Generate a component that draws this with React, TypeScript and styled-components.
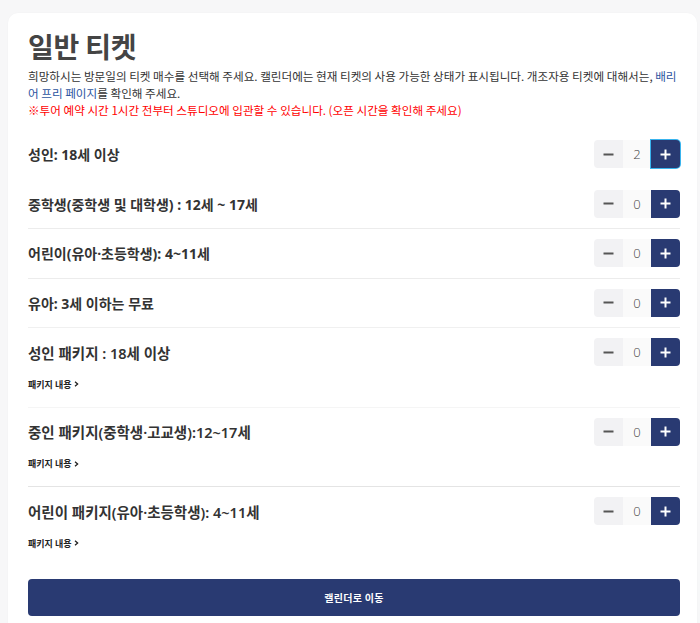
import React, { useState } from "react"
import styled, { createGlobalStyle } from "styled-components"

const GlobalStyle = createGlobalStyle`
    html, body {
        margin: 0;
        padding: 0;
        background: #f7f7f8;
        font-family: "Noto Sans CJK KR", "Noto Sans", sans-serif;
        color: #333;
    }
`

const Page = styled.div`
    padding: 13px 3px 0 8px;
`

const Card = styled.div`
    background: #fff;
    border-radius: 10px;
    padding: 15px 17px 20px 20px;
    box-shadow: 0 0 2px rgba(0, 0, 0, 0.03);
`

const Title = styled.h1`
    margin: 0;
    font-size: 28px;
    line-height: 36px;
    font-weight: 700;
    color: #444;
    letter-spacing: -0.2px;
`

const Desc = styled.p`
    margin: 4px 0 0;
    font-size: 11.6px;
    line-height: 17px;
    color: #333;
`

const Link = styled.span`
    color: #2c54a0;
`

const Notice = styled.span`
    color: #f00;
`

const List = styled.div`
    margin-top: 11px;
`

const Row = styled.div<{ $divider?: string }>`
    padding: 10px 0 10.5px;
    border-bottom: 1px solid ${(p) => p.$divider ?? "transparent"};
`

const RowTop = styled.div`
    display: flex;
    align-items: center;
    justify-content: space-between;
    height: 28px;
`

const Label = styled.span<{ $pkg?: boolean }>`
    font-family: "Noto Sans", "Noto Sans CJK KR", sans-serif;
    font-size: ${(p) => (p.$pkg ? "14.5px" : "14px")};
    font-weight: ${(p) => (p.$pkg ? 600 : 700)};
    color: #333;
`

const SubLink = styled.div`
    margin: 11.5px 0 5.5px;
    font-size: 9px;
    line-height: 13px;
    font-weight: 600;
    color: #222;
    display: flex;
    align-items: center;
    gap: 3px;
`

const Stepper = styled.div`
    display: flex;
    height: 28px;
    border-radius: 4px;
`

const StepButton = styled.button<{ $plus?: boolean; $focused?: boolean }>`
    width: 29px;
    height: 28px;
    border: none;
    padding: 0;
    display: flex;
    align-items: center;
    justify-content: center;
    cursor: pointer;
    background: ${(p) => (p.$plus ? "#293a72" : "#f2f2f4")};
    border-radius: ${(p) => (p.$plus ? "0 4px 4px 0" : "4px 0 0 4px")};
    box-shadow: ${(p) => (p.$focused ? "0 0 0 1px #39b4ee" : "none")};
`

const Value = styled.div`
    width: 28px;
    height: 28px;
    display: flex;
    align-items: center;
    justify-content: center;
    background: #fafafa;
    font-size: 13px;
    color: #444;
    font-family: "Open Sans", "Noto Sans", sans-serif;
    font-weight: 300;
`

const Submit = styled.button`
    margin-top: 12px;
    width: 100%;
    height: 37px;
    border: none;
    border-radius: 4px;
    background: #293a72;
    color: #fff;
    font-family: "Noto Sans CJK KR", sans-serif;
    font-size: 10px;
    font-weight: 700;
    letter-spacing: 0.3px;
    cursor: pointer;
`

const MinusIcon = () => (
    <svg width="11" height="11" viewBox="0 0 11 11">
        <line x1="0.5" y1="5.5" x2="10.5" y2="5.5" stroke="#555" strokeWidth="2" />
    </svg>
)

const PlusIcon = () => (
    <svg width="11" height="11" viewBox="0 0 11 11">
        <line x1="0.5" y1="5.5" x2="10.5" y2="5.5" stroke="#fff" strokeWidth="2" />
        <line x1="5.5" y1="0.5" x2="5.5" y2="10.5" stroke="#fff" strokeWidth="2" />
    </svg>
)

const Chevron = () => (
    <svg width="5" height="6" viewBox="0 0 5 6">
        <path d="M1 0.8 L3.6 3 L1 5.2" fill="none" stroke="#222" strokeWidth="1.3" />
    </svg>
)

const tickets = [
    { label: "성인: 18세 이상", count: 2, divider: "transparent", focused: true },
    { label: "중학생(중학생 및 대학생) : 12세 ~ 17세", count: 0, divider: "#ececec" },
    { label: "어린이(유아·초등학생): 4~11세", count: 0, divider: "#ececec" },
    { label: "유아: 3세 이하는 무료", count: 0, divider: "#f0f0f0" },
    { label: "성인 패키지 : 18세 이상", count: 0, pkg: true, divider: "#f5f5f5" },
    { label: "중인 패키지(중학생·고교생):12~17세", count: 0, pkg: true, divider: "#e4e4e4" },
    { label: "어린이 패키지(유아·초등학생): 4~11세", count: 0, pkg: true },
]

function App() {
    const [counts, setCounts] = useState(tickets.map((t) => t.count))

    const change = (index: number, diff: number) => {
        setCounts(counts.map((c, i) => (i === index ? Math.max(0, c + diff) : c)))
    }

    return (
        <Page>
            <GlobalStyle />
            <Card>
                <Title>일반 티켓</Title>
                <Desc>
                    희망하시는 방문일의 티켓 매수를 선택해 주세요. 캘린더에는 현재 티켓의 사용 가능한 상태가 표시됩니다. 개조자용 티켓에 대해서는, <Link>배리어 프리 페이지</Link>를 확인해 주세요.
                    <br />
                    <Notice>※투어 예약 시간 1시간 전부터 스튜디오에 입관할 수 있습니다. (오픈 시간을 확인해 주세요)</Notice>
                </Desc>
                <List>
                    {tickets.map((t, i) => (
                        <Row key={t.label} $divider={t.divider}>
                            <RowTop>
                                <Label $pkg={t.pkg}>{t.label}</Label>
                                <Stepper>
                                    <StepButton onClick={() => change(i, -1)}>
                                        <MinusIcon />
                                    </StepButton>
                                    <Value>{counts[i]}</Value>
                                    <StepButton $plus $focused={t.focused} onClick={() => change(i, 1)}>
                                        <PlusIcon />
                                    </StepButton>
                                </Stepper>
                            </RowTop>
                            {t.pkg && (
                                <SubLink>
                                    패키지 내용 <Chevron />
                                </SubLink>
                            )}
                        </Row>
                    ))}
                </List>
                <Submit>캘린더로 이동</Submit>
            </Card>
        </Page>
    )
}

export default App
